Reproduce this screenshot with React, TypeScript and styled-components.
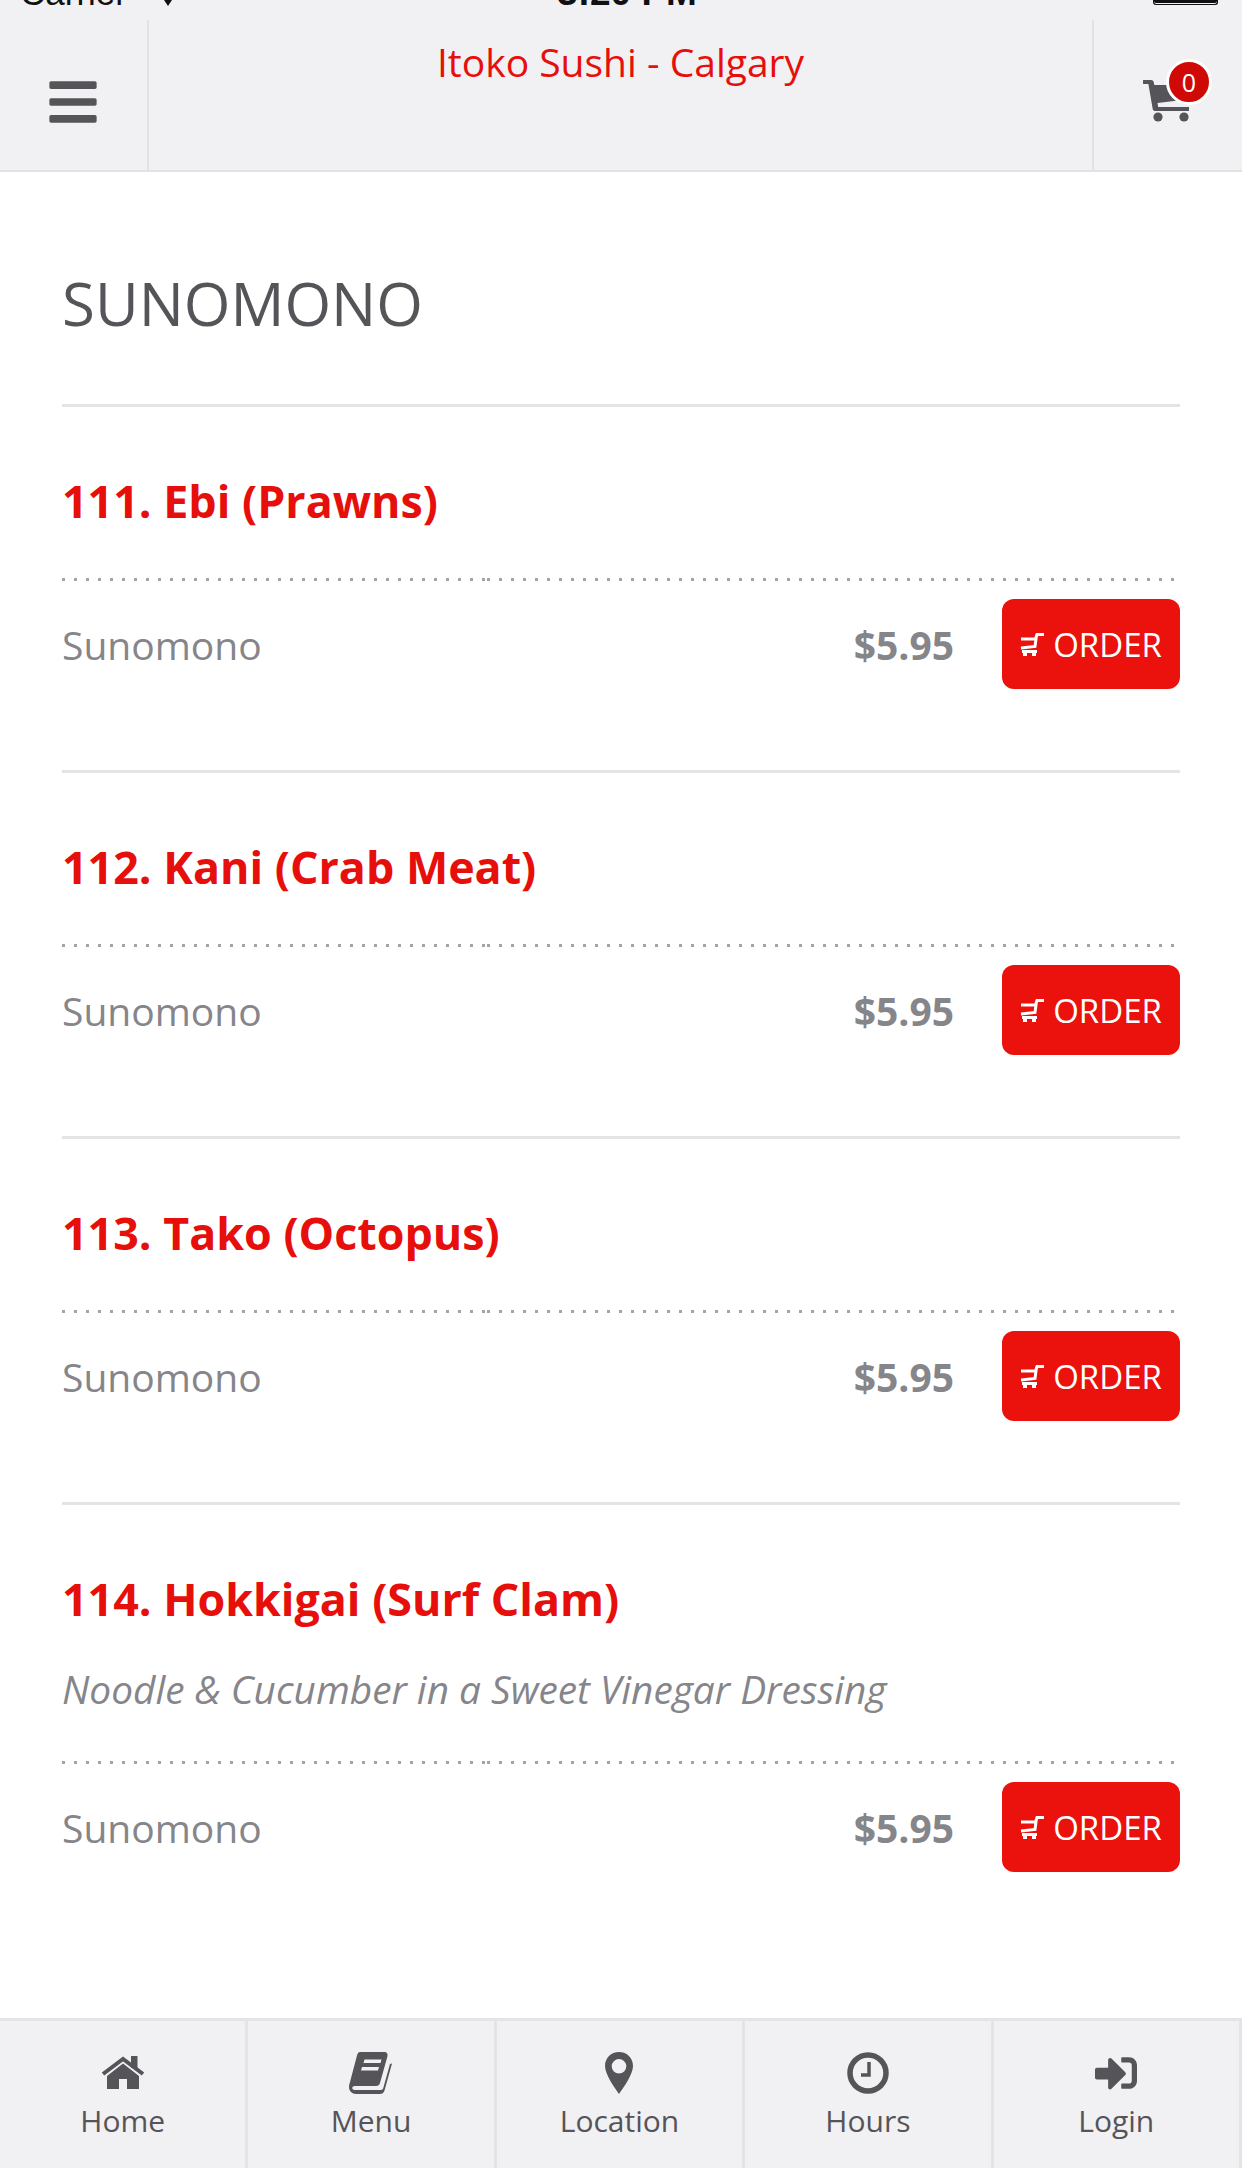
import styled, { createGlobalStyle } from "styled-components";
import { FaBars, FaSignInAlt } from "react-icons/fa";

const Global = createGlobalStyle`
  html, body { margin: 0; padding: 0; background: #fff; }
  body { font-family: "Open Sans", "Noto Sans", sans-serif; }
`;

const items = [
  { name: "111. Ebi (Prawns)" },
  { name: "112. Kani (Crab Meat)" },
  { name: "113. Tako (Octopus)" },
  { name: "114. Hokkigai (Surf Clam)", note: "Noodle & Cucumber in a Sweet Vinegar Dressing" },
];

function CartIcon() {
  return (
    <svg width="50" height="42" viewBox="0 0 50 42" fill="currentColor">
      <path d="M1 0h7c1.500 0 2.400.8 2.700 2l.6 3H48v14L14.500 23l.7 4H46v4H12c-1.200 0-2-.7-2.300-2L5.400 4H1a2 2 0 0 1 0-4z" />
      <circle cx="15" cy="37" r="4.600" />
      <circle cx="41" cy="37" r="4.600" />
    </svg>
  );
}

function SmallCartIcon() {
  return (
    <svg width="24" height="23" viewBox="0 0 24 23" fill="none" stroke="currentColor">
      <path d="M1 6h15l-1 7.500L1 15M15.500 6 17 1.500h7M2 18.500h15" strokeWidth="3" />
      <path d="M3 21.500h4M12 21.500h4" strokeWidth="3" />
    </svg>
  );
}

function HomeIcon() {
  return (
    <svg width="44" height="35" viewBox="0 0 44 35" fill="currentColor">
      <path d="M2 18 22 3l20 15" fill="none" stroke="currentColor" strokeWidth="4" />
      <path d="M30 0h6.500v12H30z" />
      <path d="M22 7.500 38 20v13H26V23h-8v10H6V20z" />
    </svg>
  );
}

function BookIcon() {
  return (
    <svg width="44" height="42" viewBox="0 0 44 42" fill="currentColor">
      <path d="M11 0h24c3 0 4 2 3.400 4.500L31 31c-.6 2-1.800 3-4 3H6c-2 0-3 1-2.700 2.400C3.600 37.700 5 38 7 38h25c1 0 1.800-.5 2.200-1.700L41 12l2-.5-7.500 27C34.800 41 33 42 31 42H7C3 42 0 39 0 35c0-1.500.3-2.700.8-4.200L8 3.500C8.600 1.300 9.500 0 11 0z" />
      <path fill="#f1f0f3" d="M15.500 7.500h17l-1 3.500h-17zM13 15h17l-1 3.500H12z" />
    </svg>
  );
}

function PinIcon() {
  return (
    <svg width="28" height="42" viewBox="0 0 28 42" fill="currentColor" fillRule="evenodd">
      <path d="M14 0C6 0 0 6 0 14c0 8 9 21 14 28 5-7 14-20 14-28C28 6 22 0 14 0zm0 7a7.300 7.300 0 1 1 0 14.600A7.300 7.300 0 0 1 14 7z" />
    </svg>
  );
}

function ClockIcon() {
  return (
    <svg width="42" height="42" viewBox="0 0 42 42" fill="none" stroke="currentColor">
      <circle cx="21" cy="21" r="18" strokeWidth="5.500" />
      <path d="M22 10v13h-8" strokeWidth="3.500" />
    </svg>
  );
}

const tabs = [
  { label: "Home", icon: <HomeIcon /> },
  { label: "Menu", icon: <BookIcon /> },
  { label: "Location", icon: <PinIcon /> },
  { label: "Hours", icon: <ClockIcon /> },
  { label: "Login", icon: <FaSignInAlt size={42} /> },
];

export default function App() {
  return (
    <Page>
      <Global />
      <Top>
        <Status>
          <Carrier>
            Carrier<WifiMark />
          </Carrier>
          <Time>3:20 PM</Time>
          <Battery />
        </Status>
        <Header>
          <Burger>
            <FaBars size={54} />
          </Burger>
          <Brand>Itoko Sushi - Calgary</Brand>
          <CartCell>
            <CartIcon />
            <Badge>0</Badge>
          </CartCell>
        </Header>
      </Top>
      <Main>
        <Heading>SUNOMONO</Heading>
        {items.map((item) => (
          <Item key={item.name}>
            <Name>{item.name}</Name>
            {item.note && <Note>{item.note}</Note>}
            <Dots />
            <Row>
              <Category>Sunomono</Category>
              <Price>$5.95</Price>
              <OrderButton>
                <SmallCartIcon />
                ORDER
              </OrderButton>
            </Row>
          </Item>
        ))}
      </Main>
      <TabBar>
        {tabs.map((tab) => (
          <Tab key={tab.label}>
            <TabIcon>{tab.icon}</TabIcon>
            <span>{tab.label}</span>
          </Tab>
        ))}
      </TabBar>
    </Page>
  );
}

const Page = styled.div`
  width: 1242px;
  height: 2168px;
  display: flex;
  flex-direction: column;
  overflow: hidden;
  background: #fff;
`;

const Top = styled.header`
  height: 172px;
  box-sizing: border-box;
  background: #f1f0f2;
  border-bottom: 2px solid #e2e2e5;
  display: flex;
  flex-direction: column;
  flex: none;
`;

const Status = styled.div`
  height: 20px;
  flex: none;
  overflow: hidden;
  display: grid;
  grid-template-columns: 1fr auto 1fr;
  padding: 0 20px;
  font-family: "Liberation Sans", sans-serif;
  color: #111;
`;

const Carrier = styled.span`
  display: block;
  margin-top: -24px;
  font-size: 35px;
  line-height: 33px;
`;

const WifiMark = styled.i`
  display: inline-block;
  width: 0;
  height: 0;
  margin-left: 37px;
  vertical-align: -1px;
  border: 4px solid transparent;
  border-top: 6px solid #111;
  border-bottom: 0;
`;

const Time = styled.span`
  display: block;
  margin-top: -24px;
  margin-left: 12px;
  font-size: 37px;
  line-height: 33px;
  font-weight: 700;
`;

const Battery = styled.div`
  justify-self: end;
  box-sizing: border-box;
  width: 65px;
  height: 5px;
  margin-right: 4px;
  border: 1px solid #111;
  border-top: 0;
  border-radius: 0 0 3px 3px;
  background: #111;
  box-shadow: inset 0 -1px 0 #f1f0f2;
`;

const Header = styled.div`
  flex: 1;
  display: grid;
  grid-template-columns: 149px 1fr 150px;
`;

const Burger = styled.div`
  display: flex;
  align-items: center;
  justify-content: center;
  color: #555458;
  border-right: 2px solid #e2e2e5;
  padding-top: 13px;
  padding-right: 2px;
`;

const Brand = styled.div`
  text-align: center;
  color: #e60f0b;
  font-size: 39px;
  line-height: 52px;
  padding-top: 16px;
`;

const CartCell = styled.div`
  position: relative;
  display: flex;
  align-items: center;
  justify-content: center;
  padding-top: 12px;
  box-sizing: border-box;
  color: #555458;
  border-left: 2px solid #e2e2e5;
`;

const Badge = styled.span`
  position: absolute;
  top: 39px;
  right: 30px;
  width: 46px;
  height: 46px;
  box-sizing: border-box;
  border-radius: 50%;
  background: #cf0a06;
  border: 3px solid #fff;
  color: #fff;
  font-size: 25px;
  line-height: 40px;
  text-align: center;
`;

const Main = styled.main`
  flex: 1;
  padding: 0 62px;
`;

const Heading = styled.h1`
  margin: 0;
  height: 235px;
  box-sizing: border-box;
  padding-top: 94px;
  font-weight: 400;
  font-size: 60px;
  line-height: 74px;
  color: #555458;
  border-bottom: 3px solid #e4e4e7;
`;

const Item = styled.section`
  padding-top: 64px;
  padding-bottom: 81px;
  border-bottom: 3px solid #e4e4e7;
  &:last-child {
    border-bottom: 0;
  }
`;

const Name = styled.h2`
  margin: 0 0 47px;
  font-size: 44.8px;
  line-height: 60px;
  font-weight: 700;
  color: #e60f0b;
`;

const Note = styled.p`
  margin: -17px 0 42px;
  font-style: italic;
  font-size: 38.8px;
  line-height: 60px;
  color: #85858a;
`;

const Dots = styled.div`
  height: 3px;
  margin-right: 4px;
  background-image:
    repeating-linear-gradient(to right, #a3a3a8 0 3px, transparent 3px 12px),
    repeating-linear-gradient(to right, #a3a3a8 0 3px, transparent 3px 12px);
  background-size: 425px 3px, 687px 3px;
  background-position: 0 0, 425px 0;
  background-repeat: no-repeat;
`;

const Row = styled.div`
  margin-top: 18px;
  display: flex;
  align-items: center;
`;

const Category = styled.span`
  flex: 1;
  font-size: 39px;
  color: #85858a;
`;

const Price = styled.span`
  font-size: 39px;
  font-weight: 700;
  color: #85858a;
  margin-right: 48px;
`;

const OrderButton = styled.button`
  width: 178px;
  height: 90px;
  border: 0;
  border-radius: 12px;
  background: #eb110c;
  color: #fff;
  font-family: inherit;
  font-size: 33px;
  display: flex;
  align-items: center;
  justify-content: center;
  gap: 9px;
  padding: 0;
`;

const TabBar = styled.nav`
  height: 150px;
  flex: none;
  box-sizing: border-box;
  background: #f1f0f3;
  border-top: 3px solid #e4e4e7;
  display: grid;
  grid-template-columns: repeat(5, 1fr);
`;

const Tab = styled.div`
  display: flex;
  flex-direction: column;
  align-items: center;
  padding-top: 31px;
  gap: 6px;
  color: #555458;
  font-size: 30px;
  border-right: 3px solid #e4e4e7;
  span {
    line-height: 42px;
  }
`;

const TabIcon = styled.div`
  height: 42px;
  display: flex;
  align-items: center;
  justify-content: center;
`;
